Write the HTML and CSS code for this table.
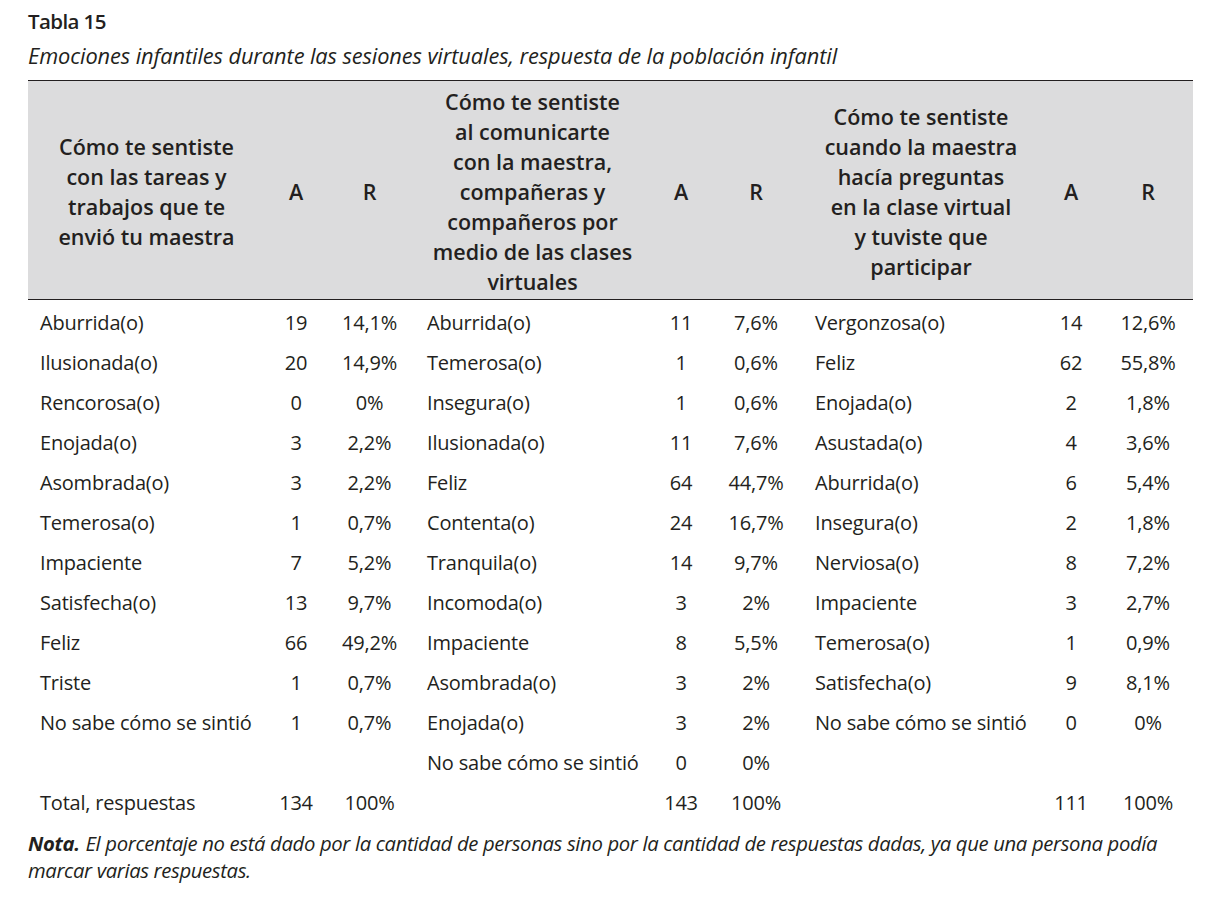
FILE: index.html
```html
<!DOCTYPE html>
<html lang="es">
<head>
<meta charset="utf-8">
<link rel="stylesheet" href="styles.css">
</head>
<body>
<div class="page">
  <div class="caption-title">Tabla 15</div>
  <div class="caption-sub">Emociones infantiles durante las sesiones virtuales, respuesta de la población infantil</div>
  <table class="data">
    <colgroup>
      <col class="c-l1"><col class="c-a1"><col class="c-r1">
      <col class="c-l2"><col class="c-a2"><col class="c-r2">
      <col class="c-l3"><col class="c-a3"><col class="c-r3">
    </colgroup>
    <thead>
      <tr>
        <th>Cómo te sentiste<br>con las tareas y<br>trabajos que te<br>envió tu maestra</th>
        <th>A</th><th>R</th>
        <th>Cómo te sentiste<br>al comunicarte<br>con la maestra,<br>compañeras y<br>compañeros por<br>medio de las clases<br>virtuales</th>
        <th>A</th><th>R</th>
        <th>Cómo te sentiste<br>cuando la maestra<br>hacía preguntas<br>en la clase virtual<br>y tuviste que<br>participar</th>
        <th>A</th><th>R</th>
      </tr>
    </thead>
    <tbody>
      <tr class="first"><td>Aburrida(o)</td><td>19</td><td>14,1%</td><td>Aburrida(o)</td><td>11</td><td>7,6%</td><td>Vergonzosa(o)</td><td>14</td><td>12,6%</td></tr>
      <tr><td>Ilusionada(o)</td><td>20</td><td>14,9%</td><td>Temerosa(o)</td><td>1</td><td>0,6%</td><td>Feliz</td><td>62</td><td>55,8%</td></tr>
      <tr><td>Rencorosa(o)</td><td>0</td><td>0%</td><td>Insegura(o)</td><td>1</td><td>0,6%</td><td>Enojada(o)</td><td>2</td><td>1,8%</td></tr>
      <tr><td>Enojada(o)</td><td>3</td><td>2,2%</td><td>Ilusionada(o)</td><td>11</td><td>7,6%</td><td>Asustada(o)</td><td>4</td><td>3,6%</td></tr>
      <tr><td>Asombrada(o)</td><td>3</td><td>2,2%</td><td>Feliz</td><td>64</td><td>44,7%</td><td>Aburrida(o)</td><td>6</td><td>5,4%</td></tr>
      <tr><td>Temerosa(o)</td><td>1</td><td>0,7%</td><td>Contenta(o)</td><td>24</td><td>16,7%</td><td>Insegura(o)</td><td>2</td><td>1,8%</td></tr>
      <tr><td>Impaciente</td><td>7</td><td>5,2%</td><td>Tranquila(o)</td><td>14</td><td>9,7%</td><td>Nerviosa(o)</td><td>8</td><td>7,2%</td></tr>
      <tr><td>Satisfecha(o)</td><td>13</td><td>9,7%</td><td>Incomoda(o)</td><td>3</td><td>2%</td><td>Impaciente</td><td>3</td><td>2,7%</td></tr>
      <tr><td>Feliz</td><td>66</td><td>49,2%</td><td>Impaciente</td><td>8</td><td>5,5%</td><td>Temerosa(o)</td><td>1</td><td>0,9%</td></tr>
      <tr><td>Triste</td><td>1</td><td>0,7%</td><td>Asombrada(o)</td><td>3</td><td>2%</td><td>Satisfecha(o)</td><td>9</td><td>8,1%</td></tr>
      <tr><td>No sabe cómo se sintió</td><td>1</td><td>0,7%</td><td>Enojada(o)</td><td>3</td><td>2%</td><td>No sabe cómo se sintió</td><td>0</td><td>0%</td></tr>
      <tr><td></td><td></td><td></td><td>No sabe cómo se sintió</td><td>0</td><td>0%</td><td></td><td></td><td></td></tr>
      <tr><td>Total, respuestas</td><td>134</td><td>100%</td><td></td><td>143</td><td>100%</td><td></td><td>111</td><td>100%</td></tr>
    </tbody>
  </table>
  <p class="note"><b class="note-lead">Nota.</b> El porcentaje no está dado por la cantidad de personas sino por la cantidad de respuestas dadas, ya que una persona podía marcar varias respuestas.</p>
</div>
</body>
</html>
```

FILE: styles.css
```css
html, body {
  margin: 0;
  padding: 0;
  background: #ffffff;
}
body {
  font-family: "Open Sans", "Noto Sans", sans-serif;
  color: #231f20;
}
.page {
  padding: 7px 33px 0 28px;
}
.caption-title {
  font-weight: 600;
  font-size: 20.5px;
  line-height: 28px;
  letter-spacing: -0.6px;
}
.caption-sub {
  font-style: italic;
  font-size: 21.8px;
  line-height: 30px;
  letter-spacing: -0.1px;
  margin-top: 6px;
  margin-bottom: 9px;
}
.data {
  width: 1165px;
  border-collapse: collapse;
  table-layout: fixed;
  font-size: 20px;
  letter-spacing: -0.2px;
}
.c-l1 { width: 237px; }
.c-a1 { width: 62px; }
.c-r1 { width: 85px; }
.c-l2 { width: 241px; }
.c-a2 { width: 56px; }
.c-r2 { width: 94px; }
.c-l3 { width: 236px; }
.c-a3 { width: 64px; }
.c-r3 { width: 90px; }
.data thead th {
  background: #dcdcdd;
  font-weight: 600;
  font-size: 21.5px;
  letter-spacing: 0;
  line-height: 30px;
  text-align: center;
  vertical-align: middle;
  padding: 6px 0 2px;
  border-top: 1.5px solid #231f20;
  border-bottom: 1.5px solid #231f20;
}
.data tbody td {
  height: 40px;
  padding: 0;
  text-align: center;
  vertical-align: middle;
  white-space: nowrap;
}
.data tbody td:nth-child(3n+1) {
  text-align: left;
  padding-left: 12px;
}
.data tbody td:nth-child(4) {
  padding-left: 15px;
}
.data tbody tr.first td {
  padding-top: 2px;
}
.note {
  margin: 8px 0 0;
  font-style: italic;
  font-size: 20.3px;
  line-height: 27px;
  letter-spacing: -0.35px;
}
.note-lead {
  display: inline-block;
  font-weight: 700;
  padding-right: 1px;
}
```
